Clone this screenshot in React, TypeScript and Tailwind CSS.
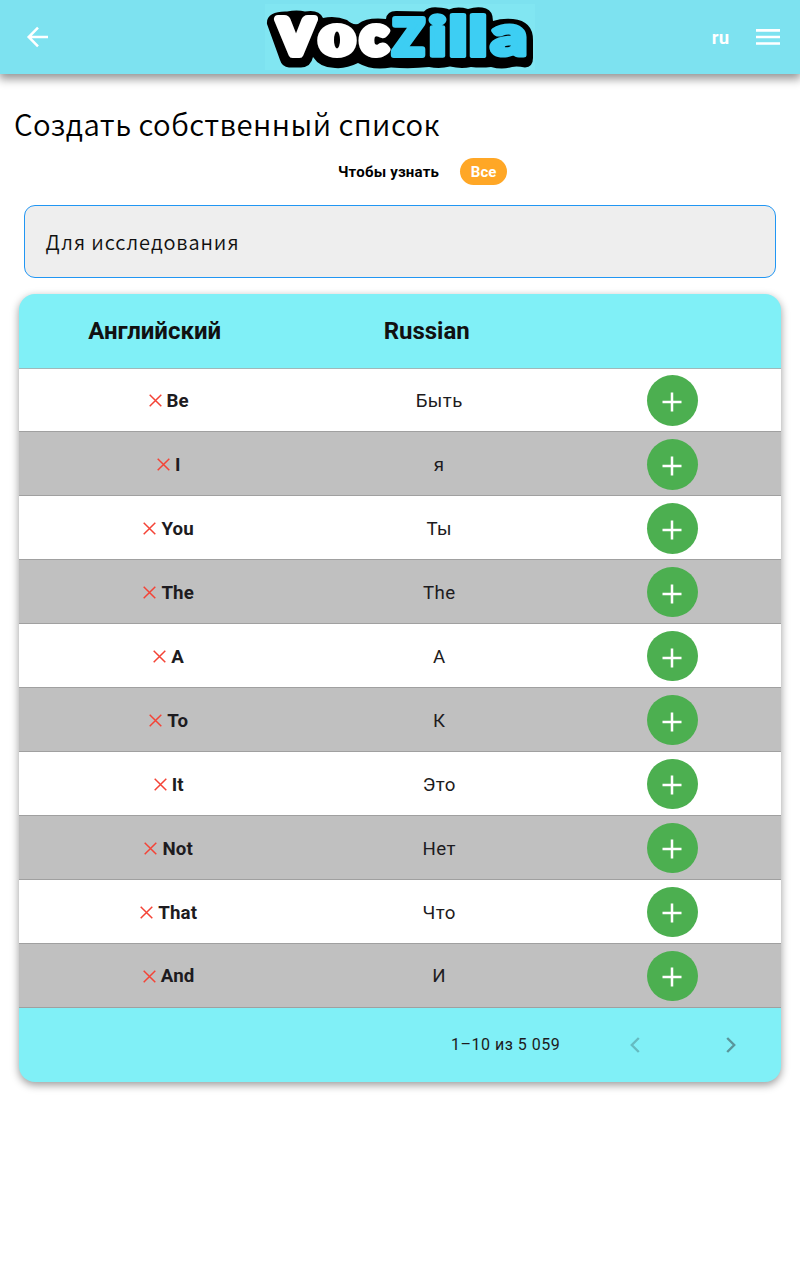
const rows: [string, string][] = [
  ["Be", "Быть"],
  ["I", "я"],
  ["You", "Ты"],
  ["The", "The"],
  ["A", "А"],
  ["To", "К"],
  ["It", "Это"],
  ["Not", "Нет"],
  ["That", "Что"],
  ["And", "И"],
];

function Logo() {
  return (
    <svg width="270" height="67" viewBox="265 4 270 67" className="block overflow-visible">
      <rect x="265" y="4" width="270" height="66" fill="#81e6f2" />
      <path
        fill="#000"
        d="M267 24C266 15 275 11 287 11.500Q297 9.500 305 11.500Q319 9 323 18Q335 15 347 20Q352 25 358 24Q367 17 386 19Q387 11 396 11L424 11.500Q429 6.500 438 7.500Q446 8 449 9.500Q457 6 468 9Q478 6 486 8.500Q493 11 493 21Q502 18 513 19Q533 21 533 40L533 58Q533 67 525 67.500Q517 66 512 67Q502 70 491 67Q481 68 471 67Q461 69 450 66.500Q440 69 429 67Q411 69 391 67.500Q372 71 358 63Q346 69 335 68Q320 68 313 57Q311 67 301 67.500L289 67.500Q282 67 280 60Z"
      />
      <g fontFamily="Lato, sans-serif" fontWeight="900" strokeLinejoin="round">
        <g fill="#fff" stroke="#fff">
          <text x="278.500" y="54" fontSize="48" strokeWidth="8" textLength="35" lengthAdjust="spacingAndGlyphs">V</text>
          <text x="320" y="53.500" fontSize="52" strokeWidth="8" textLength="34" lengthAdjust="spacingAndGlyphs">o</text>
          <text x="361" y="53.500" fontSize="52" strokeWidth="8" textLength="26" lengthAdjust="spacingAndGlyphs">c</text>
        </g>
        <ellipse cx="337" cy="40" rx="3" ry="8.500" fill="#000" />
        <g fill="#3dcef3" stroke="#3dcef3">
          <text x="393" y="55" fontSize="50" strokeWidth="6" textLength="31" lengthAdjust="spacingAndGlyphs">Z</text>
          <text x="427.500" y="55.500" fontSize="56" strokeWidth="3.500" textLength="20" lengthAdjust="spacingAndGlyphs">i</text>
          <text x="448" y="55.500" fontSize="56" strokeWidth="4" textLength="20" lengthAdjust="spacingAndGlyphs">l</text>
          <text x="468" y="55.500" fontSize="56" strokeWidth="4" textLength="20" lengthAdjust="spacingAndGlyphs">l</text>
          <text x="491" y="55" fontSize="56" strokeWidth="5" textLength="36" lengthAdjust="spacingAndGlyphs">a</text>
        </g>
      </g>
    </svg>
  );
}

function Header() {
  return (
    <header className="grid h-[74px] grid-cols-[1fr_270px_1fr] items-center bg-[#7de2f0] shadow-[0_4px_9px_1px_rgba(0,0,0,0.42)]">
      <button aria-label="Назад" className="ml-[25px] w-6">
        <svg width="24" height="24" viewBox="0 0 24 24" fill="none" stroke="#fff" strokeWidth="2.500">
          <path d="M23 12H4M13 2.700L3.700 12l9.300 9.300" />
        </svg>
      </button>
      <Logo />
      <div className="flex items-center justify-end pr-5">
        <span className="mr-[27px] pt-[3px] text-[18.500px] font-bold text-white">ru</span>
        <svg role="img" aria-label="Меню" width="24" height="18" viewBox="0 0 24 18" stroke="#fff" strokeWidth="2.700">
          <path d="M0 2.300h24M0 9h24M0 15.500h24" />
        </svg>
      </div>
    </header>
  );
}

function WordRow({ word, translation }: { word: string; translation: string }) {
  return (
    <div className="grid h-[63.930px] grid-cols-[300px_241px_226px] items-center border-b border-[#a0a0a0] pt-px odd:bg-white even:bg-[#c0c0c0]">
      <div className="flex items-center justify-center gap-[5px] pt-[1.500px] text-[18.700px] font-bold tracking-[0.150px] text-[#1d1b20]">
        <svg width="13" height="13" viewBox="0 0 13 13" stroke="#f44336" strokeWidth="1.500" className="-mt-px">
          <path d="M0.700 0.700l11.600 11.600M12.300 0.700L0.700 12.300" />
        </svg>
        {word}
      </div>
      <div className="pt-[1.500px] text-center text-[18.700px] tracking-[0.400px] text-[#1d1b20]">{translation}</div>
      <button
        aria-label="Добавить"
        className="ml-[87.500px] flex size-[50.500px] items-center justify-center rounded-full bg-[#4caf50]"
      >
        <svg width="20" height="20" viewBox="0 0 20 20" stroke="#fff" strokeWidth="2.500" className="mt-[3px]">
          <path d="M10 0.500v19M0.500 10h19" />
        </svg>
      </button>
    </div>
  );
}

export default function App() {
  return (
    <div className="h-[1280px] w-[800px] overflow-hidden bg-white font-[Roboto,sans-serif]">
      <Header />
      <h1 className="mt-[25px] ml-[14px] font-['Noto_Sans_CJK_SC',sans-serif] text-[29.300px] leading-[48px] font-[350] tracking-[0.450px] text-black">
        Создать собственный список
      </h1>
      <div className="mt-[11px] ml-[338px] flex items-center gap-[21px]">
        <span className="pt-px text-[15px] font-bold tracking-[0.200px] text-black">Чтобы узнать</span>
        <span className="flex h-[27px] w-[47px] items-center justify-center rounded-full bg-[#ffa726] pt-px text-[15px] font-bold text-white">
          Все
        </span>
      </div>
      <div className="mx-6 mt-5 flex h-[73px] items-center rounded-[11px] border border-[#2196f3] bg-[#eee] pt-px pl-[20.500px] font-['Noto_Sans_CJK_SC',sans-serif] text-[20px] font-[350] tracking-[0.850px] text-[#111]">
        Для исследования
      </div>
      <section className="mx-[18.700px] mt-4 overflow-hidden rounded-2xl bg-[#80f0f7] shadow-[0_3px_8px_rgba(0,0,0,0.4)]">
        <div className="grid h-[74.500px] grid-cols-[272px_272px_1fr] items-center border-b border-[#a0b8ba] text-center text-[24px] font-bold text-[#111]">
          <span>Английский</span>
          <span>Russian</span>
        </div>
        <div>
          {rows.map(([word, translation]) => (
            <WordRow key={word} word={word} translation={translation} />
          ))}
        </div>
        <div className="flex h-[74.500px] items-center justify-end pr-[45px]">
          <span className="mr-[70px] text-base tracking-[0.500px] text-[#1d1b20]">1–10 из 5 059</span>
          <svg width="10" height="16" viewBox="0 0 10 16" fill="none" stroke="#65bbc1" strokeWidth="2.400" className="mr-[86px]">
            <path d="M8.800 1L1.800 8l7 7" />
          </svg>
          <svg width="10" height="16" viewBox="0 0 10 16" fill="none" stroke="#59969b" strokeWidth="2.400">
            <path d="M1.200 1l7 7-7 7" />
          </svg>
        </div>
      </section>
    </div>
  );
}
